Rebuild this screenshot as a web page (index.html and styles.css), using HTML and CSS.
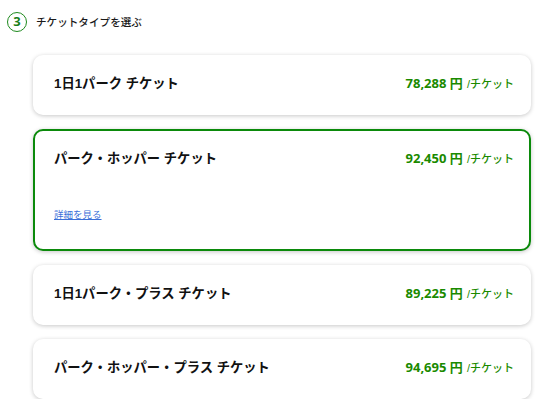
FILE: index.html
```html
<!DOCTYPE html>
<html lang="ja">
<head>
<meta charset="utf-8">
<link rel="stylesheet" href="styles.css">
</head>
<body>
<div class="step">
  <span class="step-num">3</span>
  <span class="step-label">チケットタイプを選ぶ</span>
</div>
<div class="cards">
  <div class="card">
    <div class="row">
      <span class="title">1日1パーク チケット</span>
      <span class="price"><b>78,288 円</b> <small>/チケット</small></span>
    </div>
  </div>
  <div class="card selected">
    <div class="row">
      <span class="title">パーク・ホッパー チケット</span>
      <span class="price"><b>92,450 円</b> <small>/チケット</small></span>
    </div>
    <a class="details" href="#">詳細を見る</a>
  </div>
  <div class="card">
    <div class="row">
      <span class="title">1日1パーク・プラス チケット</span>
      <span class="price"><b>89,225 円</b> <small>/チケット</small></span>
    </div>
  </div>
  <div class="card">
    <div class="row">
      <span class="title">パーク・ホッパー・プラス チケット</span>
      <span class="price"><b>94,695 円</b> <small>/チケット</small></span>
    </div>
  </div>
</div>
</body>
</html>
```
FILE: styles.css
```css
html, body {
  margin: 0;
  padding: 0;
  background: #fff;
}
body {
  font-family: "Liberation Sans", "Noto Sans CJK JP", sans-serif;
  color: #111;
  width: 547px;
}
.step {
  display: flex;
  align-items: center;
  gap: 9px;
  padding: 11px 0 0 7px;
  height: 21px;
}
.step-num {
  width: 18px;
  height: 18px;
  border: 1.5px solid #1e8a1e;
  border-radius: 50%;
  display: flex;
  align-items: center;
  justify-content: center;
  font-family: "Open Sans", "Liberation Sans", sans-serif;
  font-weight: 700;
  font-size: 13px;
  color: #1a7f1a;
  line-height: 1;
}
.step-label {
  font-size: 10.6px;
  font-weight: 500;
  color: #1a1a1a;
  font-family: "Noto Sans CJK JP", sans-serif;
}
.cards {
  display: flex;
  flex-direction: column;
  gap: 14px;
  padding: 23px 16px 0 33px;
}
.card {
  background: #fff;
  border-radius: 10px;
  box-shadow: 0 1px 4px rgba(0, 0, 0, 0.22);
  padding: 17px 17px 23px 21px;
  border: 0;
}
.card.selected {
  border: 2px solid #0b8a0b;
  padding: 16px 15px 28px 19px;
  display: flex;
  flex-direction: column;
  gap: 40px;
}
.row {
  display: flex;
  justify-content: space-between;
  align-items: center;
  height: 20px;
}
.title {
  font-weight: 700;
  font-size: 13.3px;
  font-family: "Liberation Sans", "Noto Sans CJK JP", sans-serif;
}
.price {
  color: #1a8a00;
  font-family: "Open Sans", "Noto Sans CJK JP", sans-serif;
}
.price b {
  font-weight: 700;
  font-size: 13px;
}
.price small {
  font-size: 11px;
  font-weight: 500;
  font-family: "Liberation Sans", "Noto Sans CJK JP", sans-serif;
}
.details {
  font-size: 9.5px;
  color: #3a6fd8;
  text-decoration: underline;
  font-family: "Noto Sans CJK JP", sans-serif;
  line-height: 14px;
  align-self: flex-start;
}
```
